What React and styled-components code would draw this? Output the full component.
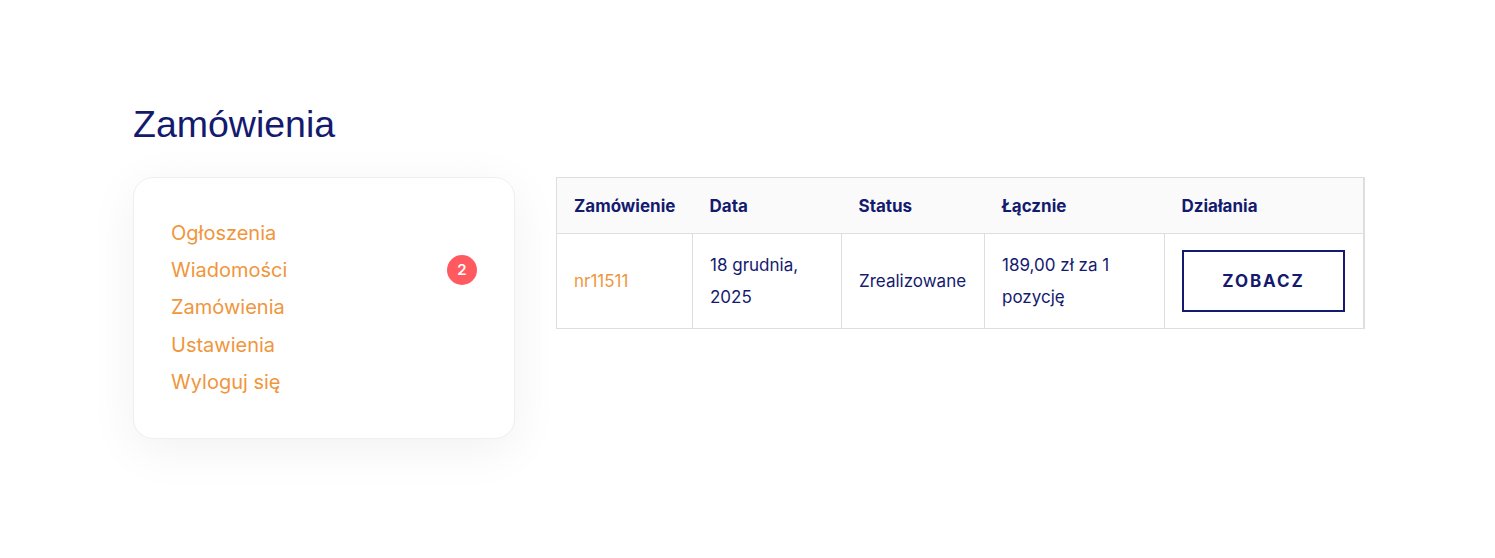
import styled, { createGlobalStyle } from 'styled-components';

const GlobalStyle = createGlobalStyle`
    body {
        margin: 0;
        background: #ffffff;
        font-family: Inter, "Noto Sans", sans-serif;
    }
`;

const Page = styled.div`
    padding: 100px 120px 119px 133px;
`;

const Title = styled.h1`
    margin: 0 0 29px;
    font-family: "Liberation Sans", Arial, sans-serif;
    font-weight: 400;
    font-size: 37.5px;
    line-height: 48px;
    color: #141a6e;
`;

const Layout = styled.div`
    display: flex;
    align-items: flex-start;
    gap: 41px;
`;

const Sidebar = styled.nav`
    flex-shrink: 0;
    width: 382px;
    height: 262px;
    box-sizing: border-box;
    padding: 36px 37px 0 37px;
    background: #ffffff;
    border: 1px solid #efefef;
    border-radius: 20px;
    box-shadow: 0 10px 50px rgba(0, 0, 0, 0.06);
`;

const MenuItem = styled.a`
    display: flex;
    align-items: center;
    justify-content: space-between;
    height: 37.3px;
    font-size: 20px;
    color: #f0963c;
    text-decoration: none;
    cursor: pointer;
`;

const Badge = styled.span`
    display: flex;
    align-items: center;
    justify-content: center;
    width: 30px;
    height: 30px;
    border-radius: 50%;
    background: #ff5a5f;
    color: #ffffff;
    font-size: 15px;
    font-weight: 600;
`;

const Table = styled.table`
    flex-shrink: 0;
    width: 807px;
    table-layout: fixed;
    border-collapse: collapse;
    border: 1px solid #dedede;
    border-right-width: 2px;
    color: #141a6e;
    font-size: 17px;
`;

const Th = styled.th`
    width: ${p => p.$w}px;
    height: 56px;
    box-sizing: border-box;
    padding: 0 17px;
    background: #fafafa;
    border-bottom: 1px solid #dedede;
    text-align: left;
    font-weight: 700;
`;

const Td = styled.td`
    height: 94px;
    padding: 0 17px;
    border-left: 1px solid #dedede;
    line-height: 32px;
    color: ${p => (p.$accent ? '#f0963c' : '#141a6e')};

    &:first-child {
        border-left: none;
    }
`;

const Button = styled.button`
    width: 163px;
    height: 62px;
    border: 2px solid #141a6e;
    background: #ffffff;
    color: #141a6e;
    font-family: Inter, "Noto Sans", sans-serif;
    font-size: 17px;
    font-weight: 700;
    letter-spacing: 1.9px;
    cursor: pointer;
`;

const menu = ['Ogłoszenia', 'Wiadomości', 'Zamówienia', 'Ustawienia', 'Wyloguj się'];

const columns = [
    { label: 'Zamówienie', w: 136 },
    { label: 'Data', w: 149 },
    { label: 'Status', w: 143 },
    { label: 'Łącznie', w: 180 },
    { label: 'Działania', w: 199 },
];

const App = () => {
    return (
        <>
            <GlobalStyle />
            <Page>
                <Title>Zamówienia</Title>
                <Layout>
                    <Sidebar>
                        {menu.map(item => (
                            <MenuItem key={item}>
                                {item}
                                {item === 'Wiadomości' && <Badge>2</Badge>}
                            </MenuItem>
                        ))}
                    </Sidebar>
                    <Table>
                        <thead>
                            <tr>
                                {columns.map(c => (
                                    <Th key={c.label} $w={c.w}>{c.label}</Th>
                                ))}
                            </tr>
                        </thead>
                        <tbody>
                            <tr>
                                <Td $accent>nr11511</Td>
                                <Td>18 grudnia,<br />2025</Td>
                                <Td>Zrealizowane</Td>
                                <Td>189,00 zł za 1<br />pozycję</Td>
                                <Td><Button>ZOBACZ</Button></Td>
                            </tr>
                        </tbody>
                    </Table>
                </Layout>
            </Page>
        </>
    );
};

export default App;
